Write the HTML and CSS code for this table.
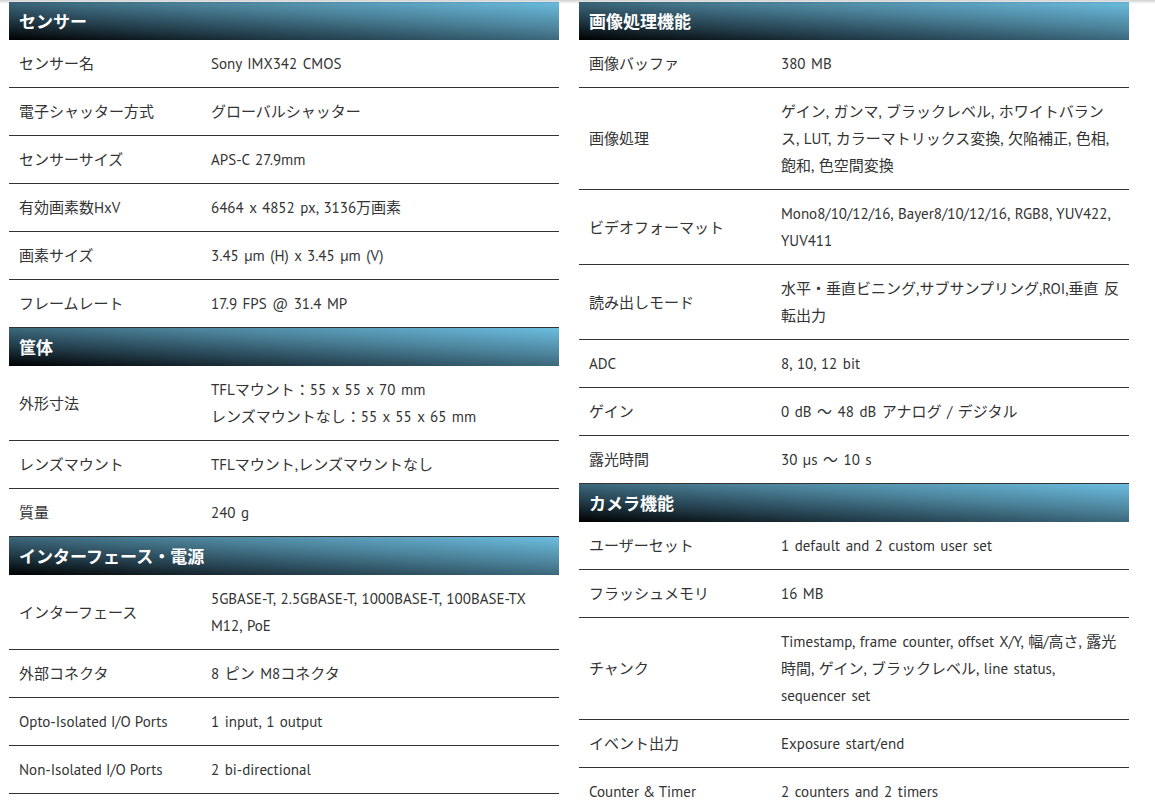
FILE: index.html
```html
<!DOCTYPE html>
<html lang="ja">
<head>
<meta charset="utf-8">
<title>仕様</title>
<link rel="stylesheet" href="styles.css">
</head>
<body>
<div class="topshade"></div>
<div class="page">
  <div class="col">
    <h2 class="sec">センサー</h2>
    <div class="row"><div class="k">センサー名</div><div class="v">Sony IMX342 CMOS</div></div>
    <div class="row"><div class="k">電子シャッター方式</div><div class="v">グローバルシャッター</div></div>
    <div class="row"><div class="k">センサーサイズ</div><div class="v">APS-C 27.9mm</div></div>
    <div class="row"><div class="k">有効画素数HxV</div><div class="v">6464 x 4852 px, 3136万画素</div></div>
    <div class="row"><div class="k">画素サイズ</div><div class="v">3.45 µm (H) x 3.45 µm (V)</div></div>
    <div class="row"><div class="k">フレームレート</div><div class="v">17.9 FPS @ 31.4 MP</div></div>
    <h2 class="sec">筐体</h2>
    <div class="row"><div class="k">外形寸法</div><div class="v">TFLマウント：55 x 55 x 70 mm<br>レンズマウントなし：55 x 55 x 65 mm</div></div>
    <div class="row"><div class="k">レンズマウント</div><div class="v">TFLマウント,レンズマウントなし</div></div>
    <div class="row"><div class="k">質量</div><div class="v">240 g</div></div>
    <h2 class="sec">インターフェース・電源</h2>
    <div class="row"><div class="k">インターフェース</div><div class="v">5GBASE-T, 2.5GBASE-T, 1000BASE-T, 100BASE-TX<br>M12, PoE</div></div>
    <div class="row"><div class="k">外部コネクタ</div><div class="v">8 ピン M8コネクタ</div></div>
    <div class="row"><div class="k">Opto-Isolated I/O Ports</div><div class="v">1 input, 1 output</div></div>
    <div class="row"><div class="k">Non-Isolated I/O Ports</div><div class="v">2 bi-directional</div></div>
  </div>
  <div class="col">
    <h2 class="sec">画像処理機能</h2>
    <div class="row"><div class="k">画像バッファ</div><div class="v">380 MB</div></div>
    <div class="row"><div class="k">画像処理</div><div class="v">ゲイン, ガンマ, ブラックレベル, ホワイトバランス, LUT, カラーマトリックス変換, 欠陥補正, 色相, 飽和, 色空間変換</div></div>
    <div class="row"><div class="k">ビデオフォーマット</div><div class="v">Mono8/10/12/16, Bayer8/10/12/16, RGB8, YUV422, YUV411</div></div>
    <div class="row"><div class="k">読み出しモード</div><div class="v">水平・垂直ビニング,サブサンプリング,ROI,垂直 反転出力</div></div>
    <div class="row"><div class="k">ADC</div><div class="v">8, 10, 12 bit</div></div>
    <div class="row"><div class="k">ゲイン</div><div class="v">0 dB ～ 48 dB アナログ / デジタル</div></div>
    <div class="row"><div class="k">露光時間</div><div class="v">30 µs ～ 10 s</div></div>
    <h2 class="sec">カメラ機能</h2>
    <div class="row"><div class="k">ユーザーセット</div><div class="v">1 default and 2 custom user set</div></div>
    <div class="row"><div class="k">フラッシュメモリ</div><div class="v">16 MB</div></div>
    <div class="row"><div class="k">チャンク</div><div class="v">Timestamp, frame counter, offset X/Y, 幅/高さ, 露光時間, ゲイン, ブラックレベル, line status, sequencer set</div></div>
    <div class="row"><div class="k">イベント出力</div><div class="v">Exposure start/end</div></div>
    <div class="row"><div class="k">Counter &amp; Timer</div><div class="v">2 counters and 2 timers</div></div>
  </div>
</div>
</body>
</html>
```
FILE: styles.css
```css
html, body {
  margin: 0;
  padding: 0;
  background: #fff;
}
body {
  font-family: "PT Sans", Lato, "Noto Sans CJK JP", sans-serif;
  font-size: 15px;
  color: #333;
}
.topshade {
  position: fixed;
  top: 0;
  left: 0;
  right: 0;
  height: 4px;
  background: linear-gradient(to bottom, rgba(0,0,0,0.18), rgba(0,0,0,0));
  z-index: 5;
}
.page {
  display: grid;
  grid-template-columns: 550px 550px;
  column-gap: 20px;
  padding: 2px 0 0 9px;
  align-items: start;
}
.sec {
  box-sizing: border-box;
  margin: 0;
  height: 38px;
  display: flex;
  align-items: center;
  padding: 0 10px 2px;
  font-family: "PT Sans", "Noto Sans CJK JP", sans-serif;
  font-size: 17px;
  font-weight: 700;
  color: #fff;
  background: linear-gradient(to top right, #000 0%, #233d4a 28%, #4a7f96 62%, #6cbde0 100%);
}
.row {
  display: grid;
  grid-template-columns: 192px 1fr;
  align-items: center;
  border-bottom: 1px solid #333;
  line-height: 27px;
}
.k {
  padding: 10px 10px;
}
.v {
  padding: 10px 9px 10px 10px;
  word-spacing: 1.5px;
}
```
